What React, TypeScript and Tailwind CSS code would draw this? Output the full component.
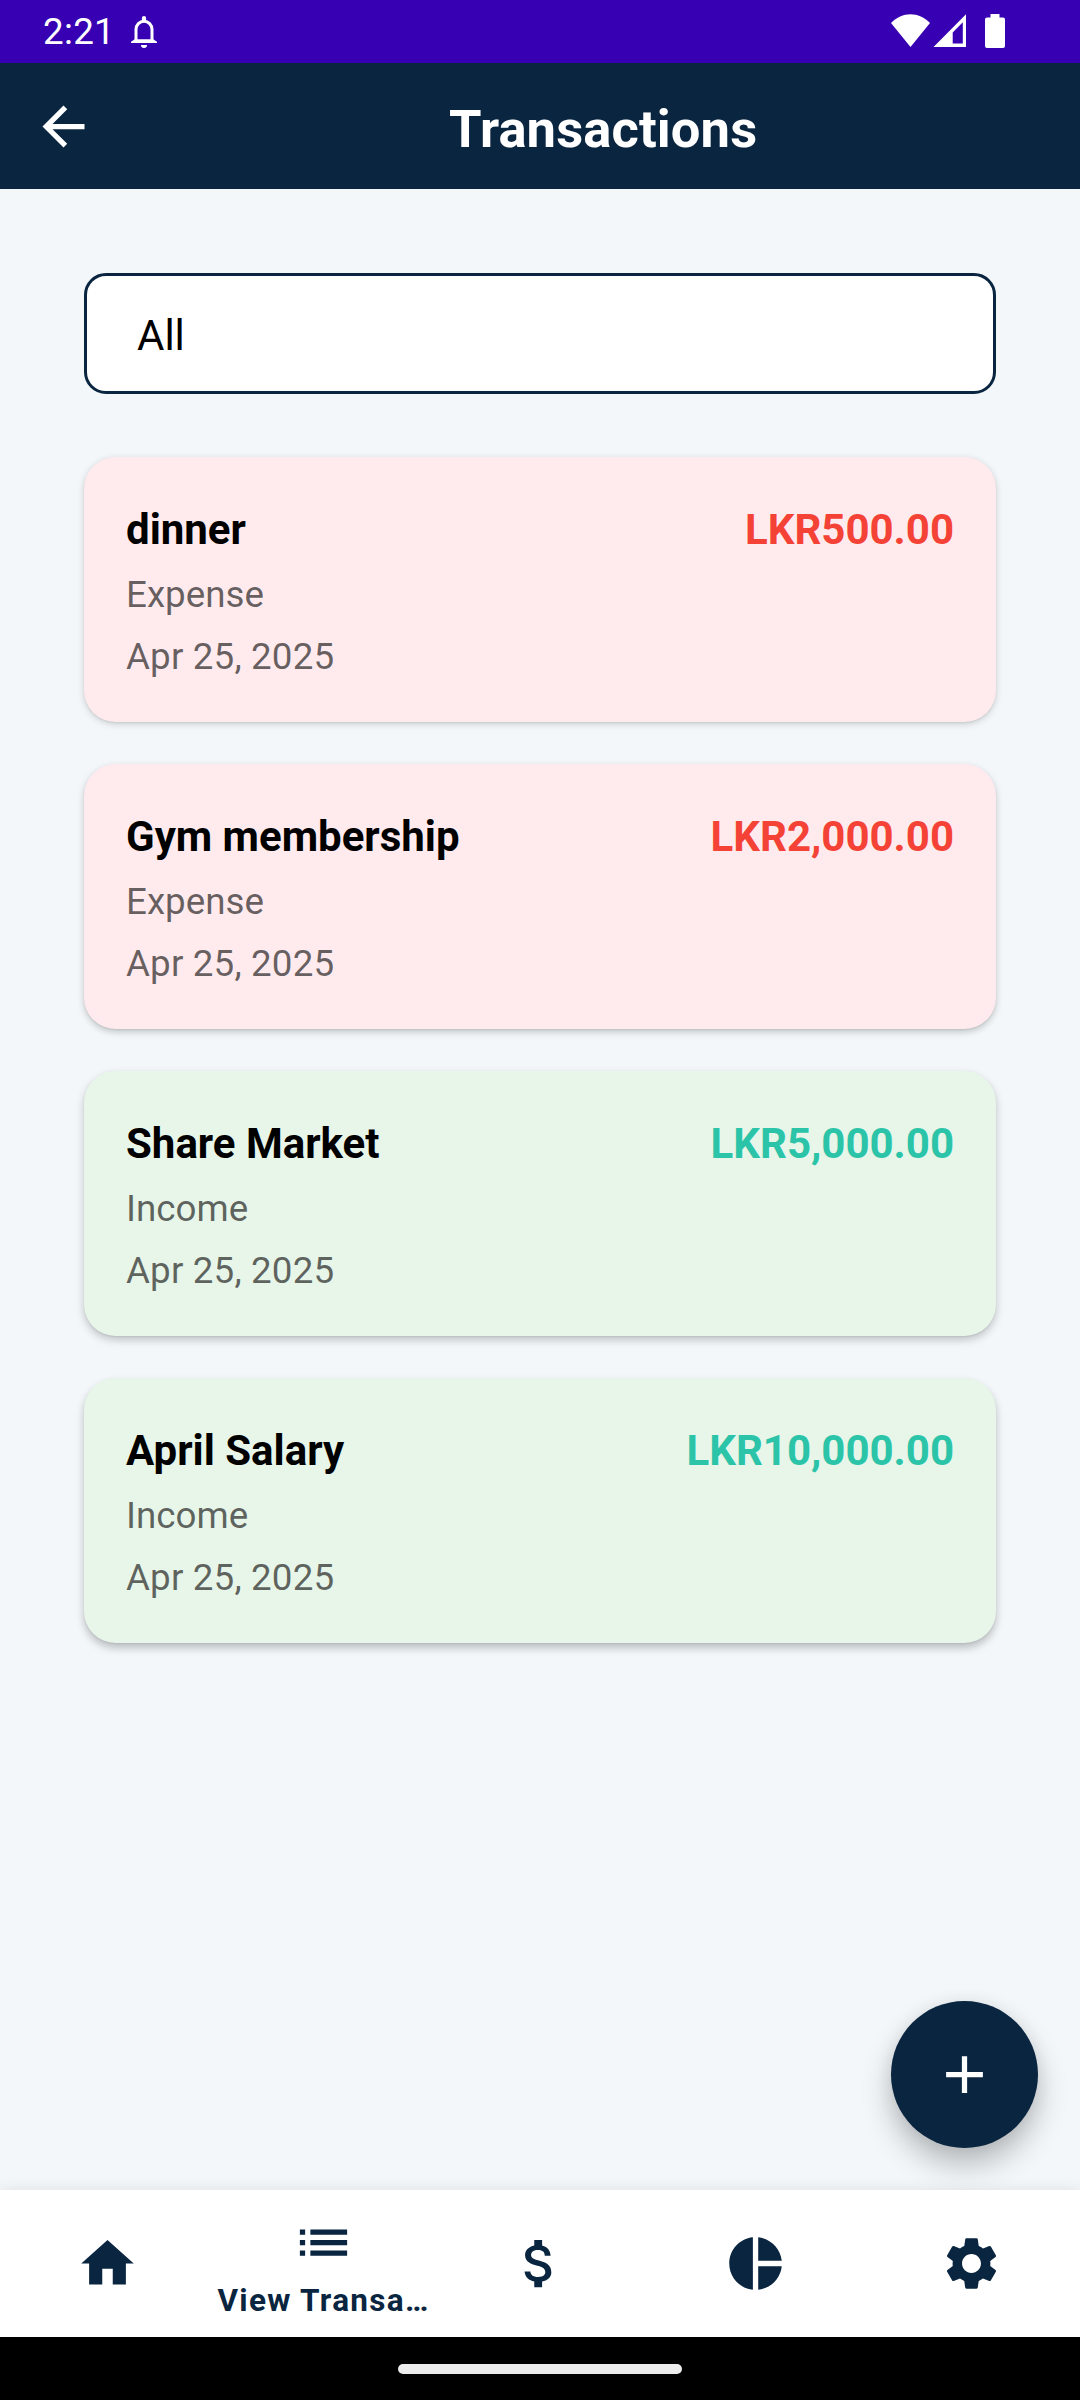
import { MdArrowBack, MdAdd, MdHome, MdList, MdAttachMoney, MdPieChart, MdSettings } from 'react-icons/md';

type Transaction = {
  title: string;
  kind: 'Expense' | 'Income';
  date: string;
  amount: string;
  shadow: string;
};

const transactions: Transaction[] = [
  { title: 'dinner', kind: 'Expense', date: 'Apr 25, 2025', amount: 'LKR500.00', shadow: 'shadow-[0_2px_7px_rgba(0,0,0,0.17),0_1px_2px_rgba(0,0,0,0.07)]' },
  { title: 'Gym membership', kind: 'Expense', date: 'Apr 25, 2025', amount: 'LKR2,000.00', shadow: 'shadow-[0_3px_7px_rgba(0,0,0,0.20),0_1px_2px_rgba(0,0,0,0.07)]' },
  { title: 'Share Market', kind: 'Income', date: 'Apr 25, 2025', amount: 'LKR5,000.00', shadow: 'shadow-[0_4px_8px_rgba(0,0,0,0.21),0_1px_2px_rgba(0,0,0,0.07)]' },
  { title: 'April Salary', kind: 'Income', date: 'Apr 25, 2025', amount: 'LKR10,000.00', shadow: 'shadow-[0_5px_9px_rgba(0,0,0,0.23),0_1px_2px_rgba(0,0,0,0.07)]' },
];

function StatusBar() {
  return (
    <div className="flex h-[63px] shrink-0 items-start bg-[#3700b3] pl-[43px] text-white">
      <span className="mt-[10px] w-[85px] text-[36.75px] leading-[43px] tracking-[0.3px]">2:21</span>
      <svg className="mt-[13px] h-[38px] w-8" viewBox="0 0 32 38" fill="none">
        <path d="M8 27.5V16.5a8 8.3 0 0 1 16 0V27.5" stroke="white" strokeWidth="3" />
        <path d="M13.9 7.5V5a2.1 2.1 0 0 1 4.2 0V7.5Z" fill="white" />
        <path d="M3 30v-1.2l3.8-2.6h18.4l3.8 2.6V30Z" fill="white" />
        <path d="M13 32h6a3 3 0 0 1-6 0Z" fill="white" />
      </svg>
      <div className="ml-[730px] flex items-start pt-[13px]">
        <svg className="h-[36px] w-[41px]" viewBox="0 0 41 36" fill="white">
          <path d="M1 10C12-1.7 29-1.7 40 10L20.5 34Z" />
        </svg>
        <svg className="ml-[2px] h-[36px] w-[34px]" viewBox="0 0 34 36">
          <path d="M0.5 34L33 1.2V34ZM19.7 30.6H29.8V9.3L19.7 19.5Z" fill="white" fillRule="evenodd" />
        </svg>
        <svg className="ml-[17px] h-[36px] w-[22px]" viewBox="0 0 22 36" fill="white">
          <path d="M6.500 1h9v3.500h3.500a2 2 0 0 1 2 2V33a2 2 0 0 1-2 2H3a2 2 0 0 1-2-2V6.500a2 2 0 0 1 2-2h3.500Z" />
        </svg>
      </div>
    </div>
  );
}

function AppBar() {
  return (
    <header className="flex h-[126px] shrink-0 items-center bg-[#0a2540] pl-8 text-white">
      <MdArrowBack className="size-[63px]" />
      <h1 className="ml-[354px] pt-[6px] text-[52.5px] leading-[62px] font-bold tracking-[0.12px]">Transactions</h1>
    </header>
  );
}

function TransactionCard({ item }: { item: Transaction }) {
  const income = item.kind === 'Income';
  return (
    <li
      className={`flex h-[265px] items-start justify-between rounded-[31.5px] px-[42px] pt-12 ${item.shadow} ${
        income ? 'bg-[#e8f5e9]' : 'bg-[#ffebee]'
      }`}
    >
      <div>
        <h2 className="text-[42px] leading-[49px] font-bold text-black">{item.title}</h2>
        <p className="mt-[19px] text-[36.75px] leading-[43px] text-black/60">{item.kind}</p>
        <p className="mt-[19px] text-[36.75px] leading-[43px] tracking-[0.15px] text-black/60">{item.date}</p>
      </div>
      <span className={`text-[42px] leading-[49px] font-bold ${income ? 'text-[#2bc4a8]' : 'text-[#f44336]'}`}>
        {item.amount}
      </span>
    </li>
  );
}

function BottomNav() {
  return (
    <nav className="relative z-10 grid h-[147px] shrink-0 grid-cols-5 bg-white text-[#0a2540] shadow-[0_0_14px_rgba(0,0,0,0.09)]">
      <a className="flex items-center justify-center pr-px">
        <MdHome className="size-[63px]" />
      </a>
      <a className="flex flex-col items-center pt-[21px] pr-px">
        <MdList className="size-[63px]" />
        <span className="mt-[8px] text-[31.5px] leading-[37px] font-bold tracking-[1.3px] whitespace-nowrap">View Transa…</span>
      </a>
      <a className="flex items-center justify-center pr-px">
        <MdAttachMoney className="size-[63px]" />
      </a>
      <a className="flex items-center justify-center pr-px">
        <MdPieChart className="size-[63px]" />
      </a>
      <a className="flex items-center justify-center pr-px">
        <MdSettings className="size-[63px]" />
      </a>
    </nav>
  );
}

export default function App() {
  return (
    <div className="flex h-[2400px] w-[1080px] flex-col overflow-hidden bg-[#f3f7fa] font-['Roboto',sans-serif]">
      <StatusBar />
      <AppBar />
      <main className="relative flex-1 px-[84px] pt-[84px]">
        <div className="flex h-[121px] items-center rounded-[22px] border-[3px] border-[#0a2540] bg-white px-[50px] pt-[4px] text-[42px] leading-[49px] text-black">
          All
        </div>
        <ul className="mt-[63px] flex flex-col gap-[42px]">
          {transactions.map((item) => (
            <TransactionCard key={item.title} item={item} />
          ))}
        </ul>
        <button
          aria-label="Add transaction"
          className="absolute right-[42px] bottom-[42px] flex size-[147px] items-center justify-center rounded-full bg-[#0a2540] text-white shadow-[0_17px_30px_rgba(0,0,0,0.24),0_2px_18px_rgba(0,0,0,0.07)]"
        >
          <MdAdd className="size-[63px]" />
        </button>
      </main>
      <BottomNav />
      <div className="flex h-[63px] shrink-0 items-start justify-center bg-black pt-[27px]">
        <div className="h-[10px] w-[284px] rounded-full bg-[#ececec]" />
      </div>
    </div>
  );
}
